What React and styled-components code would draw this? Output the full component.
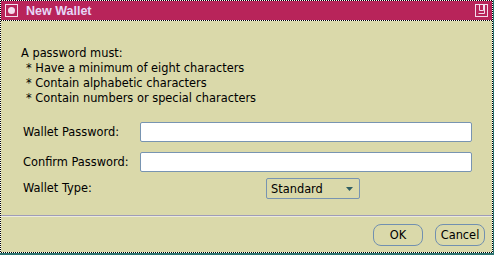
import React from 'react'
import styled, { createGlobalStyle } from 'styled-components'

const GlobalStyle = createGlobalStyle`
  html, body {
    margin: 0;
    padding: 0;
    background: #2c7470;
  }
  body {
    width: 494px;
    height: 255px;
    overflow: hidden;
    font-family: 'DejaVu Sans', 'Liberation Sans', sans-serif;
  }
`

const checker = `
  background-color: #fff;
  background-image: conic-gradient(#000 25%, #fff 0 50%, #000 0 75%, #fff 0);
  background-size: 2px 2px;
`

const Frame = styled.div`
  ${checker}
  box-sizing: border-box;
  width: 493px;
  height: 253px;
  padding: 1px;
  display: flex;
  flex-direction: column;
`

const TitleBar = styled.div`
  height: 19px;
  flex-shrink: 0;
  background: #b8245a;
  display: flex;
  align-items: center;
  padding: 0 4px 0 4px;
  margin-bottom: 1px;
`

const TitleText = styled.span`
  font-family: 'Liberation Sans', Arial, sans-serif;
  font-weight: bold;
  font-size: 12.5px;
  color: #e6d6f6;
  margin-left: 8px;
  flex: 1;
`

const Body = styled.div`
  flex: 1;
  background: #dad9aa;
  display: flex;
  flex-direction: column;
  color: #000;
  font-size: 11.4px;
`

const Content = styled.div`
  padding: 25px 20px 0 20px;
`

const Line = styled.div`
  line-height: 15px;
  height: 15px;
  white-space: pre;
  padding-left: ${p => (p.$bullet ? '5px' : '0')};
`

const Form = styled.div`
  margin: 16px 0 0 2px;
  display: flex;
  flex-direction: column;
`

const Row = styled.div`
  display: grid;
  grid-template-columns: 117px 1fr;
  align-items: center;
  margin-top: ${p => p.$top || 0}px;
`

const Label = styled.label`
  line-height: 15px;
`

const TextInput = styled.input`
  box-sizing: border-box;
  height: 20px;
  width: 100%;
  margin: 0;
  border: 1px solid #7894b1;
  border-radius: 2px;
  background: #fff;
  outline: none;
`

const Select = styled.div`
  box-sizing: border-box;
  width: 94px;
  height: 21px;
  margin-left: 126px;
  border: 1px solid #7894b1;
  border-radius: 2px;
  display: flex;
  align-items: center;
  justify-content: space-between;
  padding: 0 6px 0 4px;
`

const Separator = styled.div`
  margin-top: auto;
  height: 1px;
  background: #9f9cb9;
  border-bottom: 1px solid #ecebdc;
`

const Footer = styled.div`
  display: flex;
  justify-content: flex-end;
  gap: 12px;
  padding: 7px 7px 6px 0;
`

const Button = styled.button`
  box-sizing: border-box;
  width: 50px;
  height: 22px;
  margin: 0;
  padding: 0;
  border: 1px solid #7190b0;
  border-radius: 8px;
  background: transparent;
  font-family: 'DejaVu Sans', sans-serif;
  font-size: 11.4px;
  color: #000;
`

const WindowIcon = () => (
  <svg width="13" height="13" viewBox="0 0 13 13">
    <rect x="0.5" y="0.5" width="12" height="12" fill="none" stroke="#f2dcec" />
    <circle cx="6.5" cy="6.5" r="3.5" fill="#f2dcec" />
  </svg>
)

const CloseIcon = () => (
  <svg width="13" height="13" viewBox="0 0 13 13">
    <rect x="0.5" y="0.5" width="12" height="12" fill="none" stroke="#f2dcec" />
    <path d="M4.5 0.5 V6.5 H8.5 V0.5 M9.5 0.5 V9.5 H3.5" fill="none" stroke="#f2dcec" />
  </svg>
)

const Arrow = () => (
  <svg width="7" height="4" viewBox="0 0 7 4">
    <path d="M0 0 H7 L3.5 4 Z" fill="#2f5e62" />
  </svg>
)

export default function App() {
  return (
    <>
      <GlobalStyle />
      <Frame>
        <TitleBar>
          <WindowIcon />
          <TitleText>New Wallet</TitleText>
          <CloseIcon />
        </TitleBar>
        <Body>
          <Content>
            <Line>A password must:</Line>
            <Line $bullet>* Have a minimum of eight characters</Line>
            <Line $bullet>* Contain alphabetic characters</Line>
            <Line $bullet>* Contain numbers or special characters</Line>
            <Form>
              <Row>
                <Label>Wallet Password:</Label>
                <TextInput type="password" />
              </Row>
              <Row $top={10}>
                <Label>Confirm Password:</Label>
                <TextInput type="password" />
              </Row>
              <Row $top={6}>
                <Label>Wallet Type:</Label>
                <Select>
                  <span>Standard</span>
                  <Arrow />
                </Select>
              </Row>
            </Form>
          </Content>
          <Separator />
          <Footer>
            <Button>OK</Button>
            <Button>Cancel</Button>
          </Footer>
        </Body>
      </Frame>
    </>
  )
}
